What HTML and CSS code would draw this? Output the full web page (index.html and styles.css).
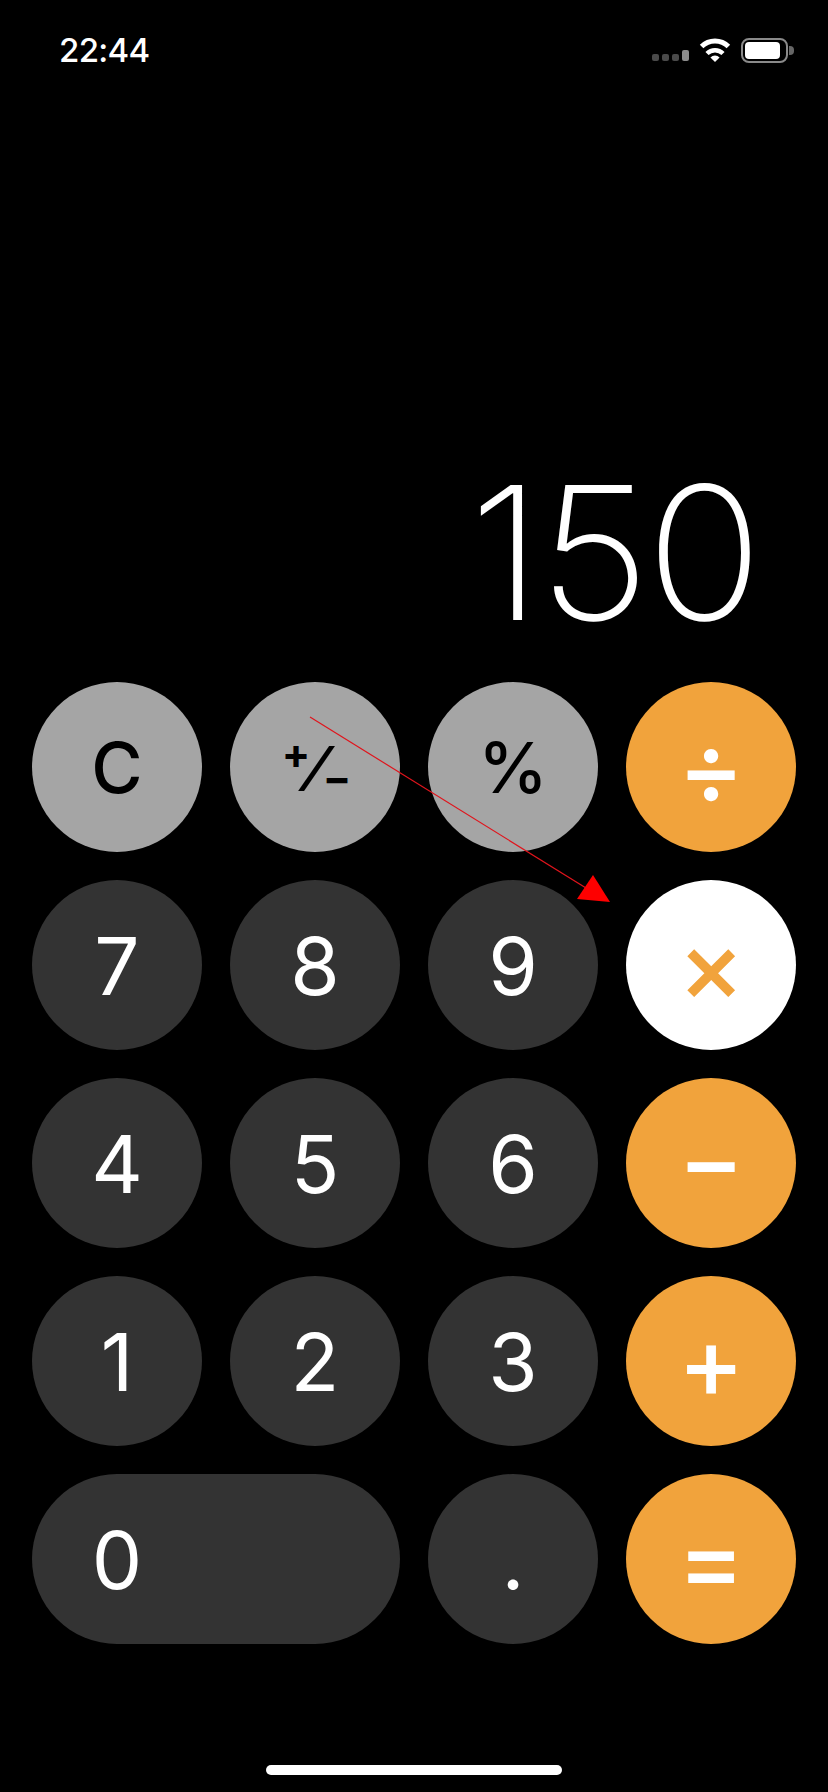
FILE: index.html
```html
<!DOCTYPE html>
<html lang="en">
<head>
  <meta charset="UTF-8" />
  <title>Calculator</title>
  <link rel="stylesheet" href="styles.css">
</head>
<body>
  <div class="phone">
    <div class="status-bar">
      <span class="time">22:44</span>
      <div class="status-icons">
        <div class="signal">
          <i></i><i></i><i></i><i class="on"></i>
        </div>
        <svg class="wifi" width="32" height="24" viewBox="0 0 32 24">
          <path d="M2.600 8.600A19 19 0 0 1 29.400 8.600" fill="none" stroke="#fff" stroke-width="5"/>
          <path d="M8 15.500A11.500 11.500 0 0 1 24 15.500" fill="none" stroke="#fff" stroke-width="4.500"/>
          <path d="M16 24L11.400 19.400A6.500 6.500 0 0 1 20.600 19.400Z" fill="#fff"/>
        </svg>
        <div class="battery">
          <div class="battery-fill"></div>
        </div>
        <div class="battery-nub"></div>
      </div>
    </div>

    <div class="display"><span class="value">150</span></div>

    <div class="keypad">
      <button class="key light">C</button>
      <button class="key light sign"><span><span class="plus">+</span><span class="slash">⁄</span><span class="minus">−</span></span></button>
      <button class="key light">%</button>
      <button class="key op">÷</button>

      <button class="key">7</button>
      <button class="key">8</button>
      <button class="key">9</button>
      <button class="key op active">×</button>

      <button class="key">4</button>
      <button class="key">5</button>
      <button class="key">6</button>
      <button class="key op raised">−</button>

      <button class="key">1</button>
      <button class="key">2</button>
      <button class="key">3</button>
      <button class="key op">+</button>

      <button class="key zero"><span>0</span></button>
      <button class="key">.</button>
      <button class="key op">=</button>
    </div>

    <div class="home-bar"></div>

    <!-- red annotation arrow drawn over the keys -->
    <svg class="arrow" width="828" height="1792" viewBox="0 0 828 1792">
      <line x1="310" y1="717" x2="586" y2="888" stroke="#e0141c" stroke-width="1.200"/>
      <polygon points="593,875 577,899 610,902" fill="#fe0000"/>
    </svg>
  </div>
</body>
</html>
```

FILE: styles.css
```css
* { box-sizing: border-box; }
body { margin: 0; background: #000; font-family: Inter, "Liberation Sans", sans-serif; color: #fff; }
.phone { position: relative; width: 828px; height: 1792px; background: #000; overflow: hidden; }

.status-bar { display: flex; justify-content: space-between; align-items: center; height: 100px; padding: 0 34px 0 59px; }
.time { font-size: 33px; font-weight: 500; letter-spacing: -0.7px; }
.status-icons { display: flex; align-items: center; }
.signal { display: flex; align-items: flex-end; gap: 3px; margin-right: 10px; margin-top: 10px; }
.signal i { width: 7px; height: 7px; border-radius: 2px; background: #4a4a4a; }
.signal i.on { height: 11px; background: #8c8c8c; }
.wifi { margin-right: 10px; }
.battery { width: 47px; height: 25px; border: 2px solid #8a8a8a; border-radius: 8px; padding: 2px; }
.battery-fill { width: 35px; height: 17px; background: #fff; border-radius: 4px; }
.battery-nub { width: 5px; height: 9px; margin-left: 1px; background: #666; border-radius: 0 4px 4px 0; }

.display { height: 582px; padding: 0 69px 36px 0; display: flex; justify-content: flex-end; align-items: flex-end; font-size: 186px; font-weight: 250; line-height: 1; letter-spacing: -4px; }
.value { transform: scaleX(1.04); transform-origin: right; }

.keypad { display: grid; grid-template-columns: repeat(4, 170px); grid-auto-rows: 170px; gap: 28px; padding: 0 32px; }
.key { border: none; padding: 0; border-radius: 85px; background: #333; color: #fff; font-family: inherit; font-size: 80px; font-weight: 400; display: flex; align-items: center; justify-content: center; }
.key.light { background: #a5a5a5; color: #000; font-size: 70px; font-weight: 500; }
.key.op { background: #f1a33c; font-size: 100px; font-weight: 500; }
.key.active { background: #fff; color: #f1a33c; font-weight: 450; }
.key.raised { padding-bottom: 8px; }
.key.zero { grid-column: span 2; justify-content: flex-start; }
.key.zero span { width: 170px; text-align: center; }

/* the +/- key is a stacked fraction, not plain text */
.key.sign { font-size: 42px; font-weight: 700; padding-left: 3px; }
.sign .plus { vertical-align: 22px; }
.sign .slash { font-size: 62px; font-weight: 600; }
.sign .minus { vertical-align: -2px; }

.home-bar { width: 296px; height: 10px; margin: 121px auto 0; background: #fff; border-radius: 5px; }

.arrow { position: absolute; left: 0; top: 0; pointer-events: none; }
```
